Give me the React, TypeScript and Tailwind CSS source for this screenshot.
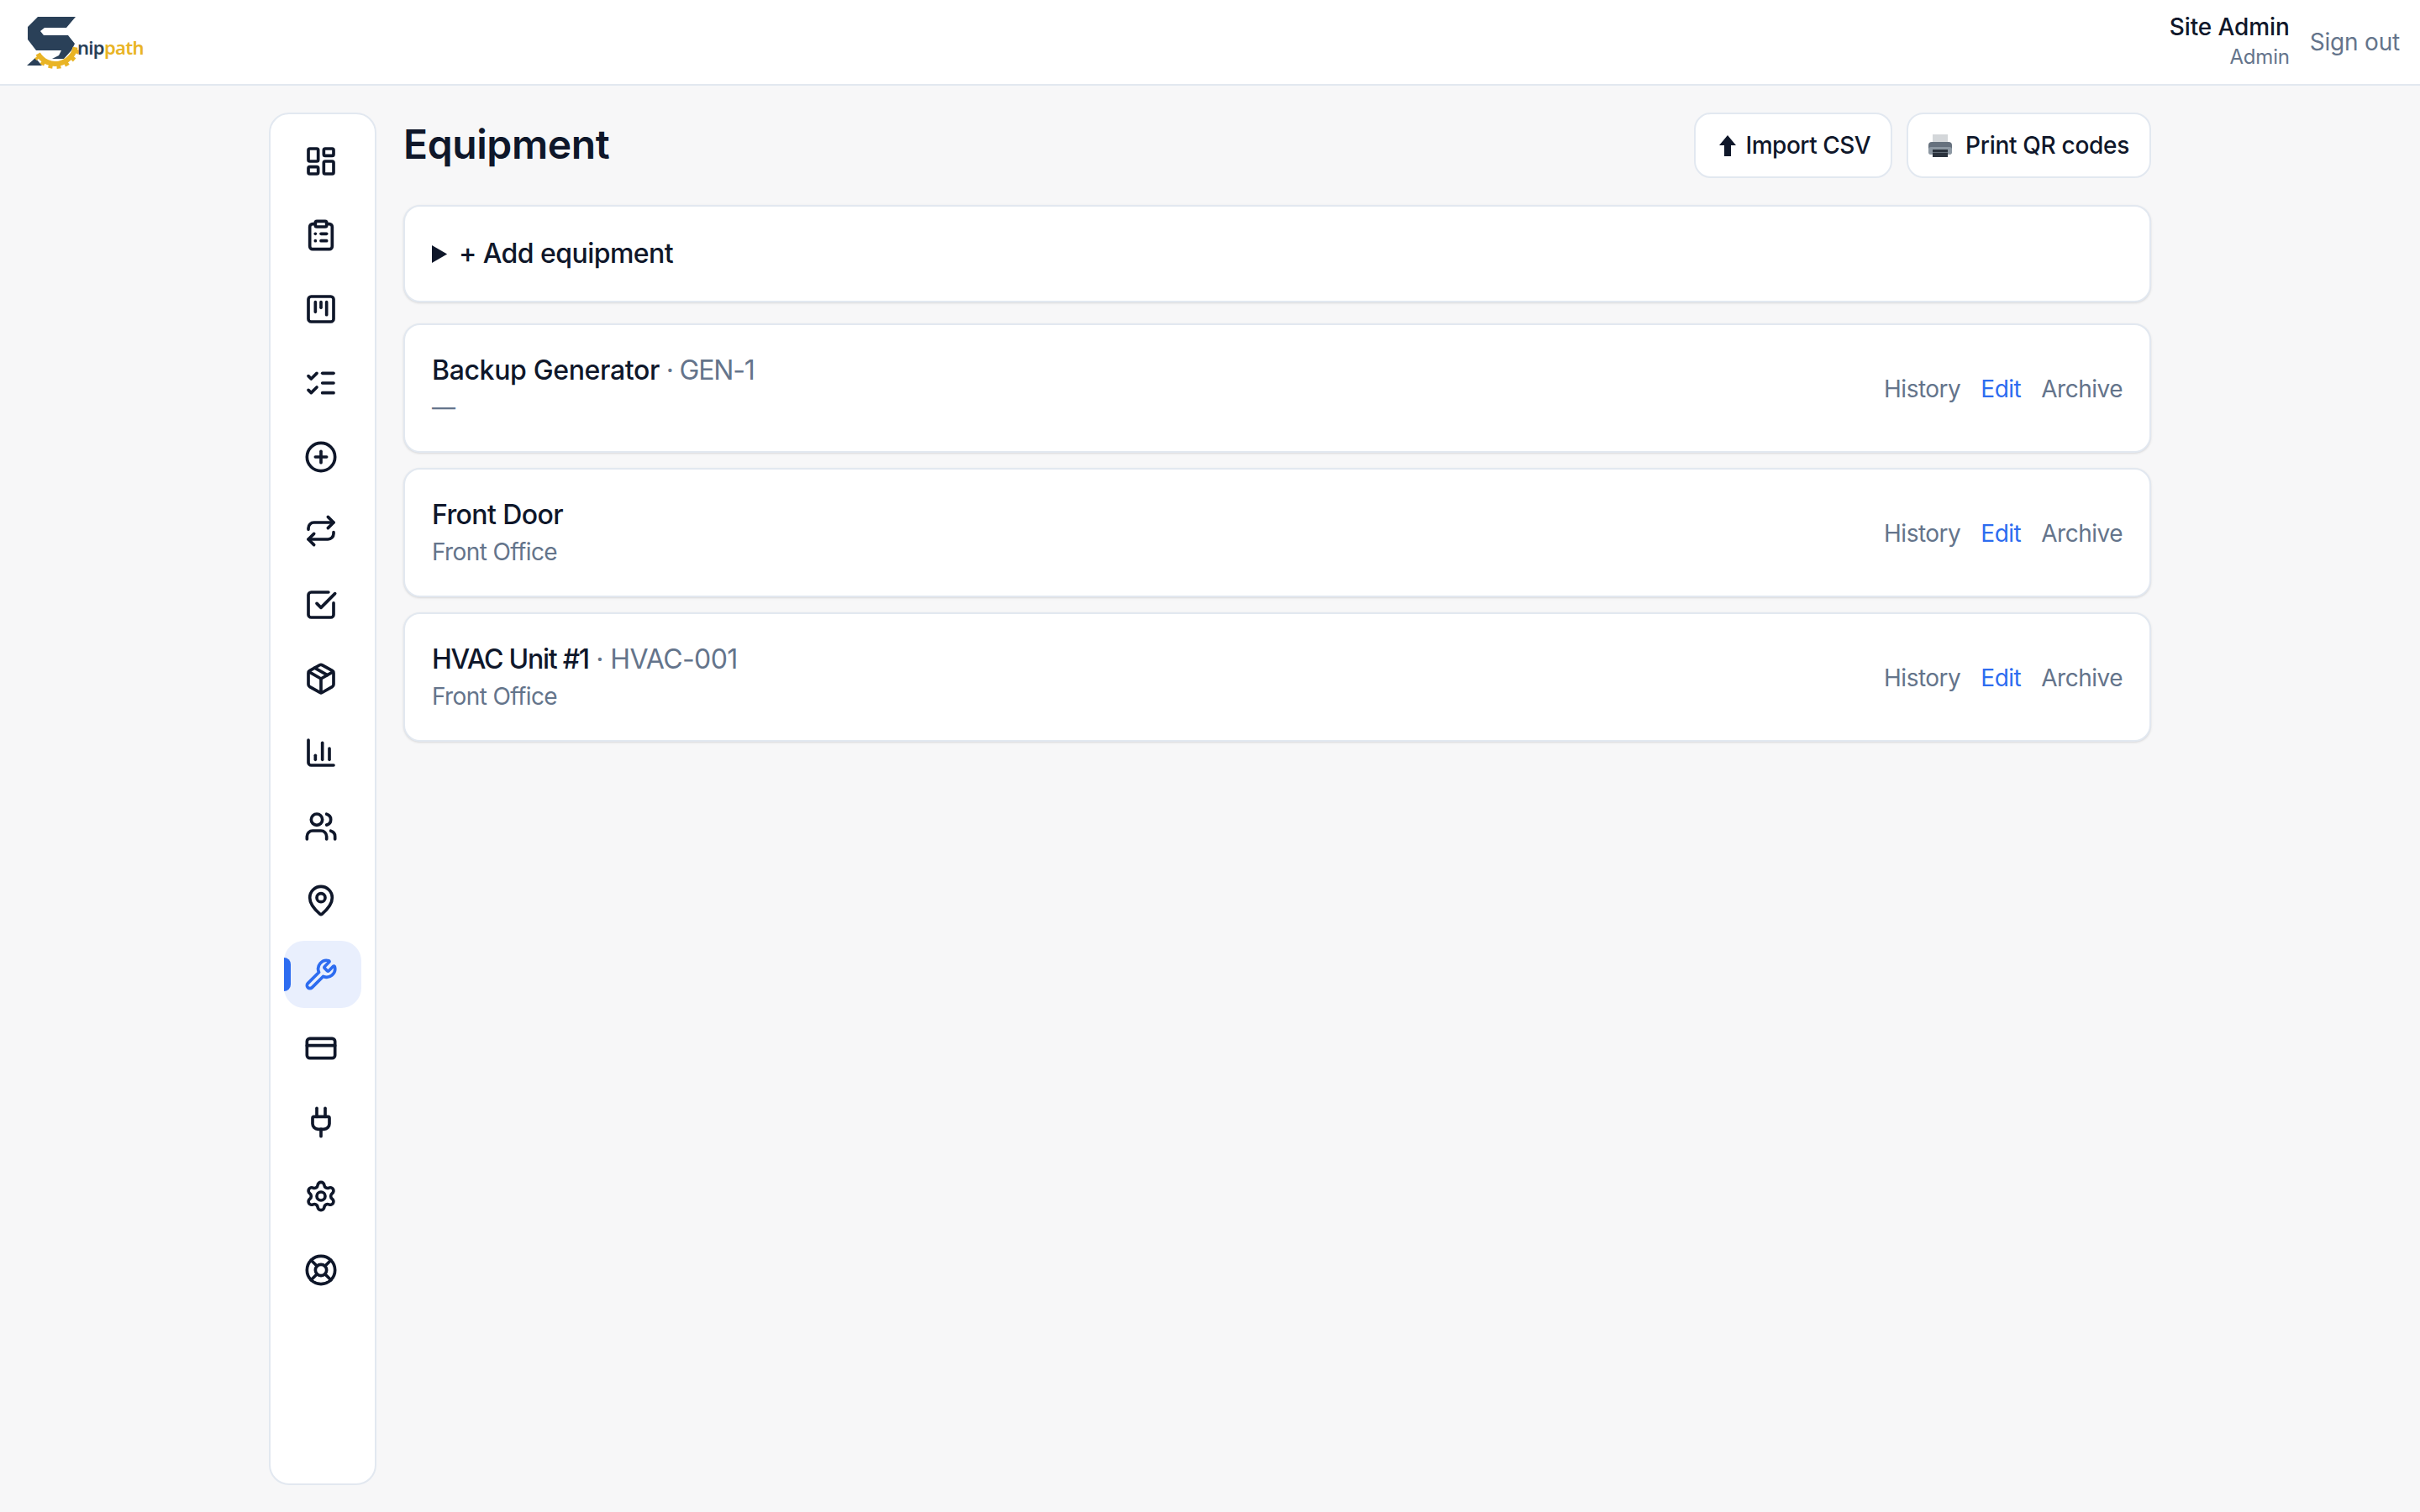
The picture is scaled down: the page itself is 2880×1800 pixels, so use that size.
import {
  LayoutDashboard,
  ClipboardList,
  SquareKanban,
  ListChecks,
  CirclePlus,
  Repeat,
  SquareCheckBig,
  Package,
  ChartColumn,
  Users,
  MapPin,
  Wrench,
  CreditCard,
  Plug,
  Settings,
  LifeBuoy,
} from 'lucide-react';

const navIcons = [
  LayoutDashboard,
  ClipboardList,
  SquareKanban,
  ListChecks,
  CirclePlus,
  Repeat,
  SquareCheckBig,
  Package,
  ChartColumn,
  Users,
  MapPin,
  Wrench,
  CreditCard,
  Plug,
  Settings,
  LifeBuoy,
];

const equipment = [
  {
    name: 'Backup Generator',
    code: 'GEN-1',
    location: '—',
    nameClass: 'tracking-[-0.35px]',
    codeClass: 'tracking-[-1.2px]',
  },
  {
    name: 'Front Door',
    code: '',
    location: 'Front Office',
    nameClass: 'tracking-[-0.6px]',
    codeClass: '',
  },
  {
    name: 'HVAC Unit #1',
    code: 'HVAC-001',
    location: 'Front Office',
    nameClass: 'tracking-[-1.25px]',
    codeClass: 'tracking-[-0.6px]',
  },
];

function Logo() {
  return (
    <div className="relative h-[100px] w-[180px] shrink-0">
      <svg className="absolute left-0 top-0" width="100" height="100" viewBox="0 0 100 100">
        <path
          d="M45 20H90L79 33H53L48 37L52 42H81L89 52L85 60L76 70H62L70 66L73 60H43L33 47V32Z"
          fill="#2a4058"
        />
        <path d="M32 78L42 69L50 78Z" fill="#2a4058" />
        <path d="M89.6 56.2A24 24 0 0 1 45.2 64" fill="none" stroke="#e9b425" strokeWidth="6" />
        <path
          d="M93 59.2A28 28 0 0 1 43 68"
          fill="none"
          stroke="#e9b425"
          strokeWidth="4"
          strokeDasharray="5 5"
        />
      </svg>
      <span className="absolute left-[92px] top-[41px] font-['Noto_Sans',sans-serif] text-[22px] font-semibold leading-[30px] tracking-[-0.7px]">
        <span className="text-[#2a4058]">nip</span>
        <span className="text-[#e9b425]">path</span>
      </span>
    </div>
  );
}

function PrinterEmoji() {
  return (
    <svg width="28" height="27" viewBox="0 0 28 27" className="shrink-0">
      <rect x="5" y="0" width="18" height="11" fill="#d4d7da" />
      <rect x="0" y="9" width="28" height="15" rx="4" fill="#66717e" />
      <rect x="0" y="15" width="28" height="9" rx="3" fill="#8d98a3" />
      <rect x="5" y="18" width="18" height="9" fill="#2b333d" />
      <rect x="5" y="21" width="18" height="1" fill="#626c77" />
    </svg>
  );
}

function UpArrow() {
  return (
    <svg width="20" height="25" viewBox="0 0 20 25" className="ml-[4px] shrink-0">
      <path d="M10 0L20 12H14V25H6V12H0Z" fill="#0f172a" />
    </svg>
  );
}

export default function App() {
  return (
    <div className="min-h-screen bg-[#f7f7f8] font-['Inter',sans-serif] text-[#0f172a]">
      <header className="flex h-[102px] items-center justify-between border-b-2 border-[#e2e8f0] bg-white pr-[24px]">
        <Logo />
        <div className="flex items-center gap-[24px]">
          <div className="text-right">
            <div className="text-[28px] font-medium leading-[36px] tracking-[-0.1px]">Site Admin</div>
            <div className="text-[24px] leading-[36px] tracking-[-0.2px] text-[#64748b]">Admin</div>
          </div>
          <span className="text-[28px] leading-[40px] tracking-[-0.2px] text-[#64748b]">Sign out</span>
        </div>
      </header>

      <div className="mx-auto flex w-[2240px] gap-[32px] pt-[32px]">
        <aside className="flex h-[1634px] w-[128px] shrink-0 flex-col gap-[8px] rounded-[24px] border-2 border-[#e2e8f0] bg-white p-[16px]">
          {navIcons.map((Icon, i) =>
            i === 11 ? (
              <div key={i} className="relative flex h-[80px] items-center rounded-[24px] bg-[#e9effd] pl-[24px] text-[#2d6cf0]">
                <span className="absolute left-0 top-[20px] h-[40px] w-[8px] rounded-r-[8px] bg-[#2d6cf0]" />
                <Icon size={40} strokeWidth={2.2} />
              </div>
            ) : (
              <div key={i} className="flex h-[80px] items-center pl-[24px]">
                <Icon size={40} strokeWidth={2.2} />
              </div>
            )
          )}
        </aside>

        <main className="min-w-0 flex-1">
          <div className="mb-[32px] flex h-[78px] items-start justify-between">
            <h1 className="text-[48px] font-semibold leading-[76px] tracking-[-0.4px]">Equipment</h1>
            <div className="flex gap-[17px]">
              <button className="flex h-[78px] items-center gap-[12px] rounded-[20px] border-2 border-[#e2e8f0] bg-white px-[24px] text-[28px] font-medium tracking-[-0.5px]">
                <UpArrow />
                Import CSV
              </button>
              <button className="flex h-[78px] items-center gap-[16px] rounded-[20px] border-2 border-[#e2e8f0] bg-white px-[24px] text-[28px] font-medium tracking-[-0.3px]">
                <PrinterEmoji />
                Print QR codes
              </button>
            </div>
          </div>

          <details className="mb-[25px] rounded-[20px] border-2 border-[#e2e8f0] bg-white px-[32px] py-[33px] shadow-sm">
            <summary className="text-[32px] font-medium leading-[46px] tracking-[-0.55px]">
              <span className="-ml-[2px]">+ Add equipment</span>
            </summary>
          </details>

          <div className="flex flex-col gap-[18px]">
            {equipment.map((item) => (
              <div
                key={item.name}
                className="flex h-[154px] items-center justify-between rounded-[20px] border-2 border-[#e2e8f0] bg-white px-[32px] shadow-sm"
              >
                <div className="pb-[2px]">
                  <div className={`text-[32px] font-medium leading-[48px] ${item.nameClass}`}>
                    {item.name}
                    {item.code && (
                      <span className={`font-normal text-[#64748b] ${item.codeClass}`}> · {item.code}</span>
                    )}
                  </div>
                  <div className="text-[28px] leading-[40px] tracking-[-0.6px] text-[#64748b]">
                    {item.location}
                  </div>
                </div>
                <div className="flex gap-[24px] pt-[2px] text-[28px] leading-[40px] tracking-[-0.5px]">
                  <span className="text-[#64748b]">History</span>
                  <span className="text-[#2d6cf0]">Edit</span>
                  <span className="text-[#64748b]">Archive</span>
                </div>
              </div>
            ))}
          </div>
        </main>
      </div>
    </div>
  );
}
